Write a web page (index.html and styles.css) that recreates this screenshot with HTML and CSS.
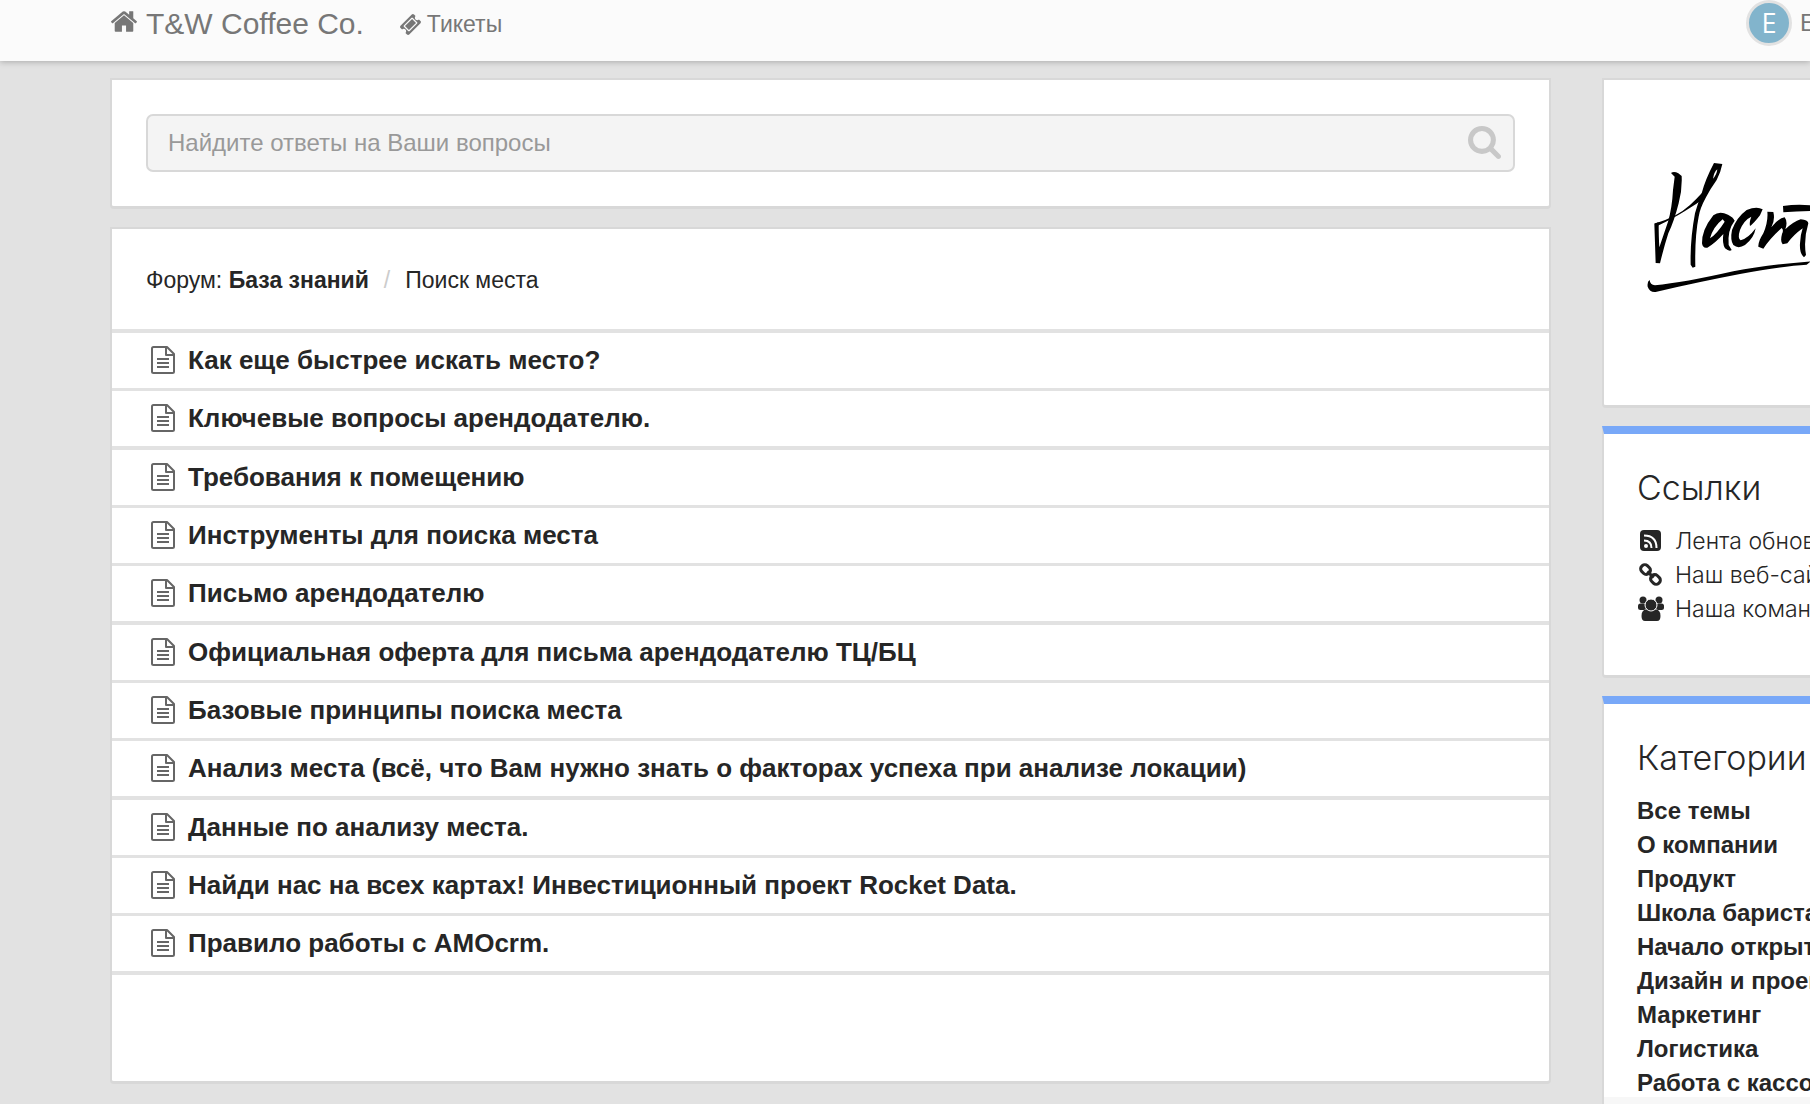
FILE: index.html
```html
<!DOCTYPE html>
<html lang="ru">
<head>
<meta charset="utf-8">
<title>T&amp;W Coffee Co.</title>
<link rel="stylesheet" href="styles.css">
</head>
<body>
<svg class="sprite" aria-hidden="true">
  <symbol id="doc" viewBox="0 0 24 28">
    <path d="M16 1H2.500Q1 1 1 2.500V25.500Q1 27 2.500 27H21.500Q23 27 23 25.500V8ZM15 1V9H23M16 1L23 8" fill="none" stroke="currentColor" stroke-width="2" stroke-linejoin="round"/>
    <path d="M6 13H18M6 17H18M6 21H18" fill="none" stroke="currentColor" stroke-width="2"/>
  </symbol>
</svg>
<header class="topbar">
  <a class="brand" href="#">
    <svg class="icon-home" viewBox="89 190 1614 1350" aria-hidden="true"><path fill="currentColor" d="M1472 992v480q0 26-19 45t-45 19h-384v-384h-256v384h-384q-26 0-45-19t-19-45v-480q0-1 .5-3t.5-3l575-474 575 474q1 2 1 6zm223-69l-62 74q-8 9-21 11h-3q-13 0-21-7l-692-577-692 577q-12 8-24 7-13-2-21-11l-62-74q-8-10-7-23.500t11-21.500l719-599q32-26 76-26t76 26l244 204v-195q0-14 9-23t23-9h192q14 0 23 9t9 23v408l219 182q10 8 11 21.500t-7 23.500z"/></svg>
    <span>T&amp;W Coffee Co.</span>
  </a>
  <a class="nav-link" href="#">
    <svg class="icon-ticket" viewBox="50 50 1692 1692" aria-hidden="true"><path fill="currentColor" d="M1024 452l316 316-572 572-316-316zm-211 979l618-618q19-19 19-45t-19-45l-362-362q-18-18-45-18t-45 18l-618 618q-19 19-19 45t19 45l362 362q18 18 45 18t45-18zm889-637l-907 908q-37 37-90.500 37t-90.500-37l-126-126q56-56 56-136t-56-136-136-56-136 56l-125-126q-37-37-37-90.500t37-90.500l907-906q37-37 90.500-37t90.500 37l125 125q-56 56-56 136t56 136 136 56 136-56l126 125q37 37 37 90.500t-37 90.500z"/></svg>
    <span>Тикеты</span>
  </a>
  <a class="user" href="#"><span class="avatar">E</span><span class="user-name">E</span></a>
</header>
<div class="layout">
  <main class="content">
    <section class="card search-card">
      <form class="search" role="search">
        <input class="search-input" type="text" aria-label="Поиск" placeholder="Найдите ответы на Ваши вопросы">
        <button class="search-button" type="button" aria-label="Найти"><svg viewBox="64 128 1664 1664" aria-hidden="true"><path fill="currentColor" d="M1216 832q0-185-131.500-316.500t-316.500-131.500-316.500 131.500-131.500 316.500 131.500 316.500 316.500 131.500 316.500-131.500 131.500-316.500zm512 832q0 52-38 90t-90 38q-54 0-90-38l-343-342q-179 124-399 124-143 0-273.500-55.500t-225-150-150-225-55.500-273.500 55.500-273.500 150-225 225-150 273.500-55.500 273.500 55.500 225 150 150 225 55.500 273.500q0 220-124 399l343 343q37 37 37 90z"/></svg></button>
      </form>
    </section>
    <section class="card topics-card">
      <nav class="breadcrumb"><span>Форум: <a href="#"><b>База знаний</b></a></span><span class="divider">/</span><a href="#">Поиск места</a></nav>
      <ul class="topics">
        <li><svg class="doc"><use href="#doc"/></svg><a href="#">Как еще быстрее искать место?</a></li>
        <li><svg class="doc"><use href="#doc"/></svg><a href="#">Ключевые вопросы арендодателю.</a></li>
        <li><svg class="doc"><use href="#doc"/></svg><a href="#">Требования к помещению</a></li>
        <li><svg class="doc"><use href="#doc"/></svg><a href="#">Инструменты для поиска места</a></li>
        <li><svg class="doc"><use href="#doc"/></svg><a href="#">Письмо арендодателю</a></li>
        <li><svg class="doc"><use href="#doc"/></svg><a href="#">Официальная оферта для письма арендодателю ТЦ/БЦ</a></li>
        <li><svg class="doc"><use href="#doc"/></svg><a href="#">Базовые принципы поиска места</a></li>
        <li><svg class="doc"><use href="#doc"/></svg><a href="#">Анализ места (всё, что Вам нужно знать о факторах успеха при анализе локации)</a></li>
        <li><svg class="doc"><use href="#doc"/></svg><a href="#">Данные по анализу места.</a></li>
        <li><svg class="doc"><use href="#doc"/></svg><a href="#">Найди нас на всех картах! Инвестиционный проект Rocket Data.</a></li>
        <li><svg class="doc"><use href="#doc"/></svg><a href="#">Правило работы с AMOcrm.</a></li>
      </ul>
    </section>
  </main>
  <aside class="sidebar">
    <section class="card logo-card">
      <svg class="logo" viewBox="138 90 492 396" aria-hidden="true">
        <g fill="#000" fill-rule="evenodd">
          <path d="M213 129Q222 123 235 130L245 138Q247 180 236 220Q222 275 205 310Q192 350 180 400L167 399Q165 340 163 281L176 276Q176 320 178 352Q192 310 204 275Q216 235 219 180L224 140Z"/>
          <path d="M163 281Q230 262 270 225Q290 207 305 190L318 200Q290 222 255 243Q220 265 172 288Z"/>
          <path d="M342 99L367 102Q362 128 350 150Q330 178 318 202Q300 235 296 260Q284 320 286 410L278 413L272 404Q270 330 285 250Q295 215 305 190Q315 150 342 99ZM352 118Q342 126 339 146Q350 135 352 118Z"/>
          <path d="M340 256Q358 242 384 254Q400 262 404 272Q382 300 386 345L395 360Q388 366 375 355Q366 340 370 312Q345 340 322 353Q308 356 306 340Q305 300 340 256ZM368 268Q340 290 330 325Q352 310 374 275Z"/>
          <path d="M396 300Q410 262 440 240Q470 228 488 238L480 256Q460 282 450 288Q447 278 454 260Q432 270 420 300Q412 325 422 331Q445 325 467 295Q462 325 435 345Q415 358 400 345Q390 330 396 300Z"/>
          <path d="M475 350Q474 335 490 310Q505 275 502 245L520 246Q526 270 514 292Q535 265 554 262Q564 275 556 298Q580 275 602 268Q624 270 625 280Q610 330 618 375L612 382Q598 370 600 340Q601 315 608 295Q580 315 562 340L548 343Q540 335 546 312Q552 300 545 294Q510 325 490 356Z"/>
          <path d="M549 228Q590 222 632 226L632 243Q590 244 550 247Z"/>
          <path d="M149 450Q150 465 165 466Q250 458 400 424Q500 405 632 394L620 404Q550 408 420 432Q300 455 170 485Q150 489 143 470Q141 455 149 450Z"/>
        </g>
      </svg>
    </section>
    <section class="card accent links-card">
      <h2>Ссылки</h2>
      <ul class="links">
        <li><svg viewBox="0 0 28 28" aria-hidden="true"><rect x="3" y="3" width="21" height="21" rx="4" fill="currentColor"/><circle cx="9" cy="19" r="2" fill="#fff"/><path d="M7 13.500Q14.500 13.500 14.500 21M7 8.500Q19.500 8.500 19.500 21" fill="none" stroke="#fff" stroke-width="2"/></svg><a href="#">Лента обновлений</a></li>
        <li><svg viewBox="0 0 28 28" aria-hidden="true"><g fill="none" stroke="currentColor" stroke-width="3" transform="rotate(45 13.500 13.500)"><rect x="1.500" y="9.500" width="10" height="8" rx="3.500"/><rect x="15.500" y="9.500" width="10" height="8" rx="3.500"/><path d="M9 13.500H18"/></g></svg><a href="#">Наш веб-сайт</a></li>
        <li><svg viewBox="0 0 28 28" aria-hidden="true"><g fill="currentColor"><circle cx="6" cy="5" r="3.500"/><circle cx="22" cy="5" r="3.500"/><rect x="1" y="8.500" width="8" height="6.500" rx="2.500"/><rect x="19" y="8.500" width="8" height="6.500" rx="2.500"/><path d="M4.500 21Q4.500 15 9 14.500H19Q23.500 15 23.500 21Q23.500 26 20 26H8Q4.500 26 4.500 21Z"/><circle cx="14" cy="10" r="6" stroke="#fff" stroke-width="1"/></g></svg><a href="#">Наша команда</a></li>
      </ul>
    </section>
    <section class="card accent categories-card">
      <h2>Категории</h2>
      <ul class="categories">
        <li><a href="#">Все темы</a></li>
        <li><a href="#">О компании</a></li>
        <li><a href="#">Продукт</a></li>
        <li><a href="#">Школа бариста</a></li>
        <li><a href="#">Начало открытия</a></li>
        <li><a href="#">Дизайн и проект</a></li>
        <li><a href="#">Маркетинг</a></li>
        <li><a href="#">Логистика</a></li>
        <li><a href="#">Работа с кассой</a></li>
      </ul>
      <div class="card-footer"></div>
    </section>
  </aside>
</div>
</body>
</html>
```
FILE: styles.css
```css
* { box-sizing: border-box; }
body {
  margin: 0;
  background: #e2e2e2;
  color: #262626;
  font-family: "Liberation Sans", Arial, sans-serif;
  font-size: 24px;
  line-height: 34px;
  overflow: hidden;
}
a { color: inherit; text-decoration: none; }
ul { list-style: none; margin: 0; padding: 0; }
svg { display: block; flex: none; }
.sprite { position: absolute; width: 0; height: 0; }

.topbar {
  display: flex;
  align-items: flex-start;
  height: 61px;
  padding-left: 111px;
  background: #fbfbfb;
  box-shadow: 0 1px 6px rgba(0, 0, 0, .25);
  color: #777;
}
.brand, .nav-link, .user { display: flex; }
.brand { gap: 9px; font-size: 30px; line-height: 48px; }
.icon-home { width: 26px; height: 22px; margin-top: 10px; }
.nav-link { gap: 6px; margin-left: 36px; font-size: 23px; line-height: 48px; }
.icon-ticket { width: 21px; height: 21px; margin-top: 14px; }
.user { gap: 8px; width: 64px; margin-left: auto; line-height: 46px; overflow: hidden; }
.avatar {
  flex: none;
  width: 46px;
  height: 46px;
  border: 3px solid #e2e2e2;
  border-radius: 50%;
  background: #82b4cc;
  color: #fff;
  font-family: "Open Sans", sans-serif;
  font-size: 27px;
  line-height: 40px;
  text-align: center;
}

.layout {
  display: grid;
  grid-template-columns: minmax(0, 1fr) 208px;
  gap: 51px;
  padding: 17px 0 0 110px;
}
.content, .sidebar { display: flex; flex-direction: column; gap: 18px; }
.card {
  background: #fff;
  border: 2px solid #d8d8d8;
  border-bottom-width: 3px;
  border-radius: 0 0 4px 4px;
}
.search-card { padding: 34px; }
.search { display: flex; position: relative; }
.search-input {
  width: 100%;
  height: 58px;
  padding: 0 60px 0 20px;
  border: 2px solid #d8d8d8;
  border-radius: 7px;
  background: #f4f4f4;
  font: inherit;
}
.search-input::placeholder { color: #999; opacity: 1; }
.search-button {
  position: absolute;
  right: 14px;
  top: 12px;
  padding: 0;
  border: 0;
  background: none;
  color: #c8c8c8;
}
.search-button svg { width: 33px; height: 33px; }

.topics-card { padding-bottom: 106px; }
.breadcrumb {
  display: flex;
  gap: 15px;
  padding: 34px 34px 32px;
  font-size: 23px;
  border-bottom: 4px solid #e2e2e2;
}
.divider { color: #ccc; }
.topics li {
  display: flex;
  align-items: center;
  gap: 13px;
  height: 58px;
  padding: 0 39px 2px;
  border-bottom: 3px solid #e2e2e2;
  font-size: 26px;
  font-weight: bold;
}
.topics li:nth-child(3n+2) { height: 59px; }
.topics li:nth-child(3n+2) { border-bottom-width: 4px; }
.doc { width: 24px; height: 28px; color: #666; }

.sidebar .card { border-right: 0; border-radius: 0 0 0 4px; overflow: hidden; white-space: nowrap; }
.sidebar .logo-card { padding: 80px 0 113px 42px; }
.logo { width: 164px; height: 132px; }
.sidebar .accent { border-top: 8px solid #78a8f8; padding: 33px 0 49px 33px; }
h2 {
  margin: 0 0 15px;
  font-family: Inter, sans-serif;
  font-size: 34px;
  font-weight: 300;
  line-height: 42px;
}
.links li { display: flex; align-items: center; gap: 10px; font-family: Inter, sans-serif; font-size: 23px; font-weight: 300; }
.links svg { width: 28px; height: 28px; }
.categories { font-weight: bold; }
.card-footer { height: 60px; margin: -3px 0 -49px -33px; background: #f7f7f7; }
```
